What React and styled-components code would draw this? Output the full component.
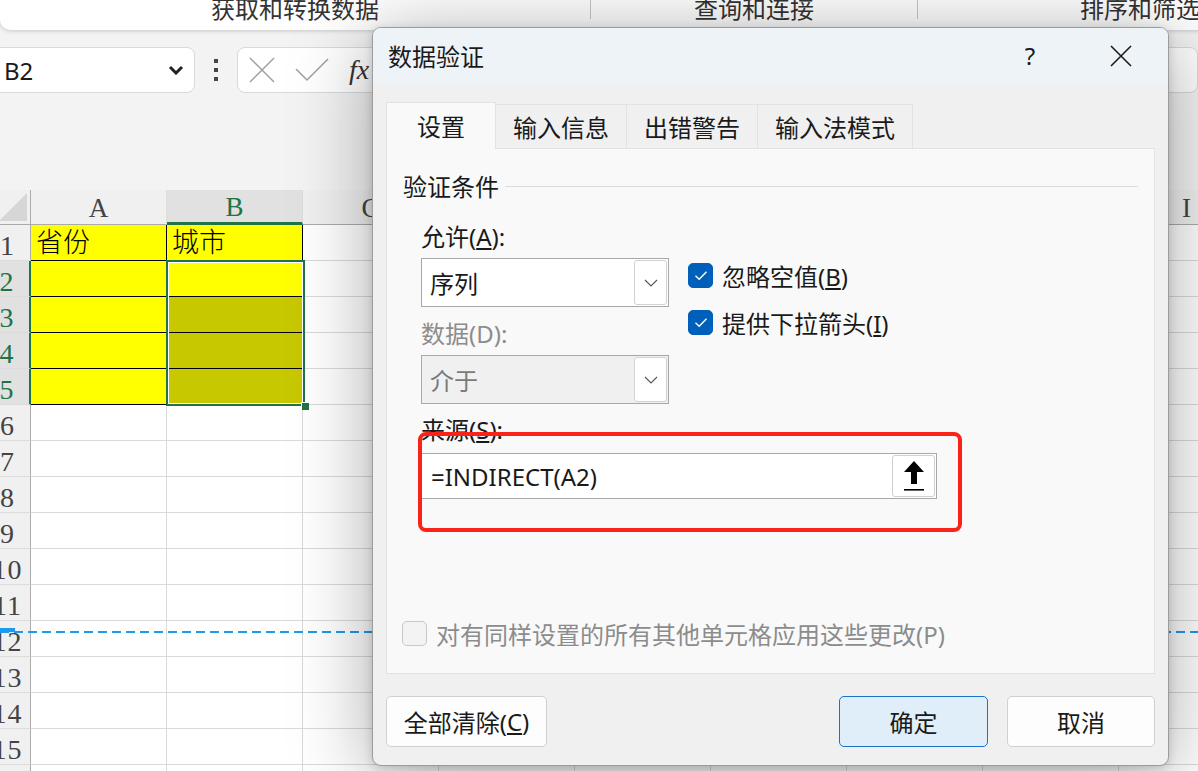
import React from 'react';
import styled, { createGlobalStyle } from 'styled-components';

const UI_FONT = `"Noto Sans", "Noto Sans CJK SC", sans-serif`;
const CELL_FONT = `"Liberation Serif", "Noto Sans CJK SC", serif`;
const GREEN = '#217346';

const GlobalStyle = createGlobalStyle`
    html, body {
        margin: 0;
        padding: 0;
        overflow: hidden;
        background: #f3f3f3;
    }
`

const Page = styled.div`
    position: relative;
    width: 1198px;
    height: 771px;
    overflow: hidden;
    background: #f3f3f3;
    font-family: ${UI_FONT};
    color: #1a1a1a;
`

/* ---------- ribbon ---------- */

const Ribbon = styled.div`
    display: flex;
    height: 30px;
    width: 1380px;
    background: #fff;
    border-radius: 0 0 10px 10px;
    box-shadow: 0 1px 4px rgba(0, 0, 0, 0.18);
`

const RibbonGroup = styled.div`
    flex: none;
    width: ${p => p.$w}px;
    display: flex;
    justify-content: center;
    font-size: 24px;
    line-height: 22px;
    color: #333;
    margin-top: -2px;
`

const RibbonSep = styled.div`
    flex: none;
    width: 1px;
    height: 19px;
    background: #c8c8c8;
`

/* ---------- formula bar ---------- */

const FormulaBar = styled.div`
    display: flex;
    align-items: center;
    height: 46px;
    margin-top: 17px;
`

const NameBox = styled.div`
    margin-left: -12px;
    width: 207px;
    height: 46px;
    box-sizing: border-box;
    background: #fff;
    border: 1px solid #d9d9d9;
    border-radius: 8px;
    display: flex;
    align-items: center;
    justify-content: space-between;
    padding: 0 10px 0 15px;
    font-size: 24px;
`

const Dots = styled.div`
    width: 42px;
    display: flex;
    flex-direction: column;
    align-items: center;
    gap: 5px;

    span {
        width: 4px;
        height: 4px;
        background: #444;
    }
`

const FormulaBox = styled.div`
    flex: 1;
    height: 46px;
    box-sizing: border-box;
    background: #fff;
    border: 1px solid #d9d9d9;
    border-radius: 8px;
    display: flex;
    align-items: center;
    padding-left: 11px;
    gap: 20px;
`

const Fx = styled.span`
    font-family: "Liberation Serif", serif;
    font-style: italic;
    font-size: 28px;
    color: #333;
`

/* ---------- sheet ---------- */

const Sheet = styled.div`
    position: relative;
    margin-top: 97px;
    margin-left: -15px;
    display: grid;
    grid-template-columns: 46px repeat(9, 136px);
    grid-template-rows: 35px;
    grid-auto-rows: 36px;
    font-family: ${CELL_FONT};
`

const Corner = styled.div`
    background: #f0f0f0;
    border-right: 1px solid #ababab;
    border-bottom: 1px solid #ababab;
    display: flex;
    align-items: flex-end;
    justify-content: flex-end;
    padding: 0 3px 3px 0;
    box-sizing: border-box;

    i {
        width: 0;
        height: 0;
        border-left: 28px solid transparent;
        border-bottom: 28px solid #d6d6d6;
    }
`

const ColHeader = styled.div`
    background: ${p => (p.$sel ? '#e1e1e1' : '#f0f0f0')};
    color: ${p => (p.$sel ? GREEN : '#444')};
    border-right: 1px solid #dcdcdc;
    border-bottom: ${p => (p.$sel ? `3px solid ${GREEN}` : '1px solid #ababab')};
    box-sizing: border-box;
    display: flex;
    align-items: center;
    justify-content: center;
    font-size: 27px;
    padding-top: 3px;
`

const RowHeader = styled.div`
    background: ${p => (p.$sel ? '#e1e1e1' : '#f0f0f0')};
    color: ${p => (p.$sel ? GREEN : '#444')};
    border-right: ${p => (p.$sel ? `2px solid ${GREEN}` : '1px solid #ababab')};
    border-bottom: 1px solid #dcdcdc;
    box-sizing: border-box;
    display: flex;
    align-items: center;
    justify-content: center;
    font-size: 28px;
    padding-top: 6px;
    letter-spacing: 1px;
`

const Cell = styled.div`
    background: ${p => p.$fill || '#fff'};
    border-right: 1px solid ${p => (p.$table ? '#000' : '#dadada')};
    border-bottom: 1px solid ${p => (p.$table ? '#000' : '#dadada')};
    box-sizing: border-box;
    display: flex;
    align-items: flex-end;
    padding: 0 0 0 5px;
    font-size: 27px;
    font-weight: 300;
    line-height: 33px;
    color: #000;
`

const Selection = styled.div`
    position: absolute;
    left: 181px;
    top: 70px;
    width: 139px;
    height: 146px;
    box-sizing: border-box;
    border: 2px solid ${GREEN};
    box-shadow: inset 0 0 0 1px #fff;
    pointer-events: none;

    &::after {
        content: '';
        position: absolute;
        right: -6px;
        bottom: -6px;
        width: 7px;
        height: 7px;
        background: ${GREEN};
        border-left: 1px solid #fff;
        border-top: 1px solid #fff;
    }
`

const PageBreak = styled.div`
    position: absolute;
    left: 15px;
    right: 0;
    top: 441px;
    height: 2px;
    background: repeating-linear-gradient(90deg, #1a9bf0 0 9px, transparent 9px 14px);

    &::before {
        content: '';
        position: absolute;
        left: 0;
        top: -3px;
        width: 15px;
        height: 4px;
        background: #1a9bf0;
    }
`

/* ---------- dialog ---------- */

const Dialog = styled.div`
    position: absolute;
    left: 372px;
    top: 27px;
    width: 797px;
    box-sizing: border-box;
    background: #f0f0f0;
    border: 1px solid #9c9c9c;
    border-radius: 9px;
    box-shadow: 0 10px 80px rgba(0, 0, 0, 0.34), 0 2px 10px rgba(0, 0, 0, 0.16);
    display: flex;
    flex-direction: column;
    overflow: hidden;
    font-size: 24px;
`

const TitleBar = styled.div`
    height: 55px;
    background: #eef3f8;
    display: flex;
    align-items: center;
    padding-left: 15px;
`

const TitleButton = styled.div`
    width: ${p => p.$w}px;
    height: 55px;
    display: flex;
    align-items: center;
    justify-content: center;
    margin-left: ${p => (p.$auto ? 'auto' : '0')};
`

const Body = styled.div`
    padding: 18px 13px 18px 13px;
    display: flex;
    flex-direction: column;
    position: relative;
`

const TabRow = styled.div`
    display: flex;
    align-items: flex-end;
    height: 47px;
    position: relative;
    z-index: 1;
`

const Tab = styled.div`
    height: ${p => (p.$active ? 47 : 45)}px;
    box-sizing: border-box;
    padding: 0 ${p => (p.$active ? 30 : 17)}px;
    display: flex;
    align-items: center;
    background: ${p => (p.$active ? '#f9f9f9' : '#f0f0f0')};
    border: 1px solid #e2e2e2;
    border-bottom: ${p => (p.$active ? '1px solid #f9f9f9' : '1px solid #e2e2e2')};
    margin-left: -1px;
    margin-bottom: -1px;

    &:first-child {
        margin-left: 0;
    }
`

const Panel = styled.div`
    height: 526px;
    box-sizing: border-box;
    background: #f9f9f9;
    border: 1px solid #e2e2e2;
    padding: 23px 16px 0 16px;
    display: flex;
    flex-direction: column;
`

const SectionTitle = styled.div`
    display: flex;
    align-items: center;
    gap: 6px;
    line-height: 30px;

    &::after {
        content: '';
        flex: 1;
        height: 1px;
        background: #dcdcdc;
        margin-top: -2px;
    }
`

const Content = styled.div`
    padding-left: 18px;
    margin-top: 20px;
`

const Columns = styled.div`
    display: flex;
    gap: 19px;
`

const LeftCol = styled.div`
    width: 248px;
    display: flex;
    flex-direction: column;
`

const RightCol = styled.div`
    padding-top: 38px;
    display: flex;
    flex-direction: column;
    gap: 16px;
`

const Label = styled.div`
    line-height: 30px;
    margin-top: ${p => p.$mt || 0}px;
    color: ${p => (p.$disabled ? '#8c8c8c' : '#1a1a1a')};
`

const SelectBox = styled.div`
    height: 49px;
    margin-top: 6px;
    box-sizing: border-box;
    background: ${p => (p.$disabled ? '#f0f0f0' : '#fff')};
    color: ${p => (p.$disabled ? '#7a7a7a' : '#1a1a1a')};
    border: 1px solid #a8a8a8;
    display: flex;
    align-items: center;
    padding: 0 1px 0 8px;
`

const ChevronButton = styled.div`
    margin-left: auto;
    width: 33px;
    height: 45px;
    box-sizing: border-box;
    background: #fff;
    border: 1px solid #d2d2d2;
    border-radius: 3px;
    display: flex;
    align-items: center;
    justify-content: center;
`

const CheckRow = styled.div`
    height: 31px;
    display: flex;
    align-items: center;
    gap: 9px;
    color: ${p => (p.$disabled ? '#8c8c8c' : '#1a1a1a')};
`

const CheckBox = styled.div`
    width: 25px;
    height: 25px;
    box-sizing: border-box;
    border-radius: 5px;
    background: ${p => (p.$checked ? '#005fb8' : '#f3f3f3')};
    border: 1px solid ${p => (p.$checked ? '#005fb8' : '#c8c8c8')};
    display: flex;
    align-items: center;
    justify-content: center;
`

const SourceInput = styled.div`
    width: 516px;
    height: 46px;
    margin-top: 8px;
    box-sizing: border-box;
    background: #fff;
    border: 1px solid #a8a8a8;
    display: flex;
    align-items: center;
    padding: 0 1px 0 9px;
`

const PickButton = styled.div`
    margin-left: auto;
    width: 43px;
    height: 42px;
    box-sizing: border-box;
    background: #fff;
    border: 1px solid #cfcfcf;
    border-radius: 3px;
    display: flex;
    align-items: center;
    justify-content: center;
`

const Highlight = styled.div`
    position: absolute;
    left: 45px;
    top: 349px;
    width: 544px;
    height: 100px;
    box-sizing: border-box;
    border: 4px solid #fa2318;
    border-radius: 8px;
    pointer-events: none;
`

const ApplyRow = styled(CheckRow)`
    margin-top: auto;
    margin-bottom: 24px;
    margin-left: -1px;
`

const Footer = styled.div`
    display: flex;
    gap: 19px;
    margin-top: 22px;
`

const Button = styled.div`
    width: ${p => p.$w}px;
    height: 51px;
    box-sizing: border-box;
    border-radius: 5px;
    border: 1px solid ${p => (p.$primary ? '#1b72c6' : '#d0d0d0')};
    background: ${p => (p.$primary ? '#e0eef9' : '#fdfdfd')};
    display: flex;
    align-items: center;
    justify-content: center;
    margin-left: ${p => (p.$auto ? 'auto' : '0')};
`

/* ---------- data ---------- */

const COLS = ['A', 'B', 'C', 'D', 'E', 'F', 'G', 'H', 'I'];
const ROWS = Array.from({ length: 16 }, (_, i) => i + 1);

const cellProps = (r, c) => {
    if (r === 1 && c === 0) return { $fill: '#ffff00', $table: true, text: '省份' };
    if (r === 1 && c === 1) return { $fill: '#ffff00', $table: true, text: '城市' };
    if (r >= 2 && r <= 5 && c === 0) return { $fill: '#ffff00', $table: true };
    if (r === 2 && c === 1) return { $fill: '#ffff00', $table: true };
    if (r >= 3 && r <= 5 && c === 1) return { $fill: '#c8c800', $table: true };
    return {};
};

const Check = () => (
    <svg width="14" height="11" viewBox="0 0 14 11">
        <path d="M1.5 5.8 L5.2 9.2 L12.5 1.8" fill="none" stroke="#fff" strokeWidth="1.4" />
    </svg>
);

const Chevron = () => (
    <svg width="14" height="8" viewBox="0 0 14 8">
        <path d="M1 1 L7 7 L13 1" fill="none" stroke="#555" strokeWidth="1.1" />
    </svg>
);

const App = () => {
    return (
        <Page>
            <GlobalStyle />

            <Ribbon>
                <RibbonGroup $w={590}>获取和转换数据</RibbonGroup>
                <RibbonSep />
                <RibbonGroup $w={326}>查询和连接</RibbonGroup>
                <RibbonSep />
                <RibbonGroup $w={444}>排序和筛选</RibbonGroup>
            </Ribbon>

            <FormulaBar>
                <NameBox>
                    <span>B2</span>
                    <svg width="16" height="10" viewBox="0 0 16 10">
                        <path d="M2 2 L8 8 L14 2" fill="none" stroke="#222" strokeWidth="3" />
                    </svg>
                </NameBox>
                <Dots><span /><span /><span /></Dots>
                <FormulaBox>
                    <svg width="26" height="26" viewBox="0 0 26 26">
                        <path d="M1 1 L25 25 M25 1 L1 25" stroke="#a0a0a0" strokeWidth="1.5" />
                    </svg>
                    <svg width="34" height="24" viewBox="0 0 34 24">
                        <path d="M1 11 L12 22 L33 1" fill="none" stroke="#a0a0a0" strokeWidth="1.5" />
                    </svg>
                    <Fx>fx</Fx>
                </FormulaBox>
            </FormulaBar>

            <Sheet>
                <Corner><i /></Corner>
                {COLS.map(c => (
                    <ColHeader key={c} $sel={c === 'B'}>{c}</ColHeader>
                ))}
                {ROWS.map(r => (
                    <React.Fragment key={r}>
                        <RowHeader $sel={r >= 2 && r <= 5}>{r}</RowHeader>
                        {COLS.map((c, ci) => {
                            const { text, ...rest } = cellProps(r, ci);
                            return <Cell key={c} {...rest}>{text}</Cell>;
                        })}
                    </React.Fragment>
                ))}
                <Selection />
                <PageBreak />
            </Sheet>

            <Dialog>
                <TitleBar>
                    数据验证
                    <TitleButton $w={88} $auto>?</TitleButton>
                    <TitleButton $w={94}>
                        <svg width="22" height="22" viewBox="0 0 22 22">
                            <path d="M1 1 L21 21 M21 1 L1 21" stroke="#1a1a1a" strokeWidth="1.6" />
                        </svg>
                    </TitleButton>
                </TitleBar>

                <Body>
                    <TabRow>
                        <Tab $active>设置</Tab>
                        <Tab>输入信息</Tab>
                        <Tab>出错警告</Tab>
                        <Tab>输入法模式</Tab>
                    </TabRow>

                    <Panel>
                        <SectionTitle>验证条件</SectionTitle>
                        <Content>
                            <Columns>
                                <LeftCol>
                                    <Label>允许(<u>A</u>):</Label>
                                    <SelectBox>
                                        序列
                                        <ChevronButton><Chevron /></ChevronButton>
                                    </SelectBox>
                                    <Label $mt={12} $disabled>数据(D):</Label>
                                    <SelectBox $disabled>
                                        介于
                                        <ChevronButton><Chevron /></ChevronButton>
                                    </SelectBox>
                                </LeftCol>
                                <RightCol>
                                    <CheckRow>
                                        <CheckBox $checked><Check /></CheckBox>
                                        <span>忽略空值(<u>B</u>)</span>
                                    </CheckRow>
                                    <CheckRow>
                                        <CheckBox $checked><Check /></CheckBox>
                                        <span>提供下拉箭头(<u>I</u>)</span>
                                    </CheckRow>
                                </RightCol>
                            </Columns>
                            <Label $mt={11}>来源(<u>S</u>):</Label>
                            <SourceInput>
                                =INDIRECT(A2)
                                <PickButton>
                                    <svg width="26" height="34" viewBox="0 0 26 34">
                                        <path d="M13 2 L3 13 L10 13 L10 25 L16 25 L16 13 L23 13 Z" fill="#000" />
                                        <rect x="3" y="30" width="20" height="1.6" fill="#000" />
                                    </svg>
                                </PickButton>
                            </SourceInput>
                        </Content>

                        <ApplyRow $disabled>
                            <CheckBox />
                            <span>对有同样设置的所有其他单元格应用这些更改(P)</span>
                        </ApplyRow>
                    </Panel>

                    <Footer>
                        <Button $w={161}>全部清除(<u>C</u>)</Button>
                        <Button $w={149} $primary $auto>确定</Button>
                        <Button $w={148}>取消</Button>
                    </Footer>

                    <Highlight />
                </Body>
            </Dialog>
        </Page>
    );
};

export default App;
